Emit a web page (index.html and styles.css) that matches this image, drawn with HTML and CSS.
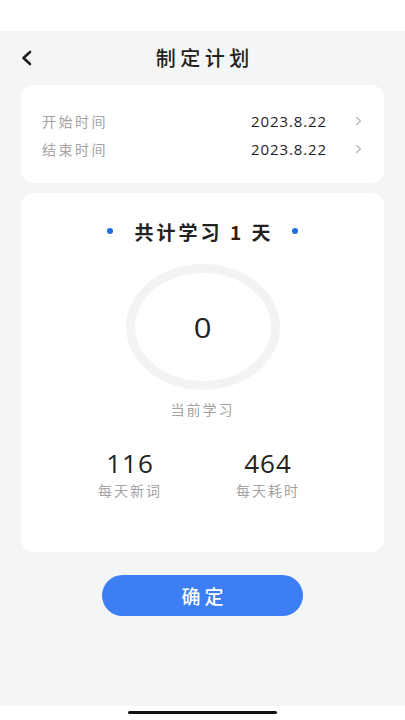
FILE: index.html
```html
<!DOCTYPE html>
<html lang="zh-CN">
<head>
<meta charset="utf-8">
<meta name="viewport" content="width=405, initial-scale=1">
<title>制定计划</title>
<link rel="stylesheet" href="styles.css">
</head>
<body>
<div class="phone">
  <div class="status-bar"></div>
  <main class="main">
    <header class="header">
      <button class="back" aria-label="返回">
        <svg width="14" height="16" viewBox="0 0 14 16"><path d="M10 2 L3.5 8 L10 14" fill="none" stroke="#222" stroke-width="2.6" stroke-linecap="round" stroke-linejoin="round"/></svg>
      </button>
      <h1 class="title">制定计划</h1>
    </header>

    <section class="card dates">
      <div class="row">
        <span class="label">开始时间</span>
        <span class="value">2023.8.22</span>
        <svg class="chev" width="7" height="10" viewBox="0 0 7 10"><path d="M1.5 1.5 L5.5 5 L1.5 8.5" fill="none" stroke="#b5b5b5" stroke-width="1.2" stroke-linecap="round" stroke-linejoin="round"/></svg>
      </div>
      <div class="row">
        <span class="label">结束时间</span>
        <span class="value">2023.8.22</span>
        <svg class="chev" width="7" height="10" viewBox="0 0 7 10"><path d="M1.5 1.5 L5.5 5 L1.5 8.5" fill="none" stroke="#b5b5b5" stroke-width="1.2" stroke-linecap="round" stroke-linejoin="round"/></svg>
      </div>
    </section>

    <section class="card plan">
      <div class="plan-title">
        <span class="dot"></span>
        <span class="plan-text">共计学习 1 天</span>
        <span class="dot"></span>
      </div>
      <div class="ring"><span class="ring-num">0</span></div>
      <div class="ring-label">当前学习</div>
      <div class="stats">
        <div class="stat">
          <div class="stat-num">116</div>
          <div class="stat-label">每天新词</div>
        </div>
        <div class="stat">
          <div class="stat-num">464</div>
          <div class="stat-label">每天耗时</div>
        </div>
      </div>
    </section>

    <div class="btn-wrap"><button class="confirm">确定</button></div>
  </main>
  <div class="home-bar"><span class="indicator"></span></div>
</div>
</body>
</html>
```

FILE: styles.css
```css
* { box-sizing: border-box; }
html, body { margin: 0; padding: 0; }
body {
  font-family: "Noto Sans CJK SC", "Open Sans", sans-serif;
  background: #ffffff;
  color: #222;
}
.phone {
  width: 405px;
  height: 720px;
  display: flex;
  flex-direction: column;
}
.status-bar { height: 31px; background: #fff; flex: none; }
.main {
  flex: 1;
  background: #f4f5f7;
  display: flex;
  flex-direction: column;
}
.header {
  height: 54px;
  flex: none;
  display: flex;
  align-items: center;
  justify-content: center;
  position: relative;
}
.back {
  position: absolute;
  left: 20px;
  top: 19px;
  border: 0;
  background: none;
  padding: 0;
  width: 14px;
  height: 16px;
  display: flex;
}
.title {
  margin: 0;
  font-size: 20px;
  font-weight: 500;
  letter-spacing: 4.5px;
  margin-right: -4.5px;
  line-height: 28px;
  color: #222;
}
.card {
  background: #fff;
  border-radius: 13px;
  margin: 0 21px;
}
.dates {
  padding: 22px 22px 20px 21px;
}
.row {
  height: 28px;
  display: flex;
  align-items: center;
}
.label {
  flex: 1;
  font-size: 14px;
  letter-spacing: 2.5px;
  color: #a3a3a3;
}
.value {
  font-family: "Open Sans", sans-serif;
  font-size: 15px;
  letter-spacing: 0.9px;
  color: #1e1e1e;
}
.chev { margin-left: 28px; }
.plan {
  margin-top: 10px;
  padding: 26px 0 52px;
  display: flex;
  flex-direction: column;
  align-items: center;
}
.plan-title {
  height: 24px;
  display: flex;
  align-items: center;
  gap: 22px;
}
.dot {
  width: 6px;
  height: 6px;
  border-radius: 50%;
  background: #1c6de2;
}
.plan-text {
  font-size: 19px;
  font-weight: 700;
  letter-spacing: 3px;
  margin-right: -3px;
  color: #222;
}
.ring {
  margin-top: 21px;
  width: 154px;
  height: 126px;
  border-radius: 50%;
  border: 9px solid #f2f3f5;
  display: flex;
  align-items: center;
  justify-content: center;
}
.ring-num {
  font-family: "Open Sans", sans-serif;
  font-size: 27px;
  color: #222;
  transform: scaleX(1.15);
}
.ring-label {
  margin-top: 9px;
  line-height: 20px;
  font-size: 14px;
  letter-spacing: 2px;
  color: #a3a3a3;
}
.stats {
  margin-top: 29px;
  display: flex;
  gap: 38px;
  padding-right: 7px;
}
.stat {
  width: 100px;
  display: flex;
  flex-direction: column;
  align-items: center;
}
.stat-num {
  font-family: "Open Sans", sans-serif;
  font-size: 26px;
  line-height: 30px;
  letter-spacing: 1px;
  color: #222;
}
.stat-label {
  margin-top: 2px;
  line-height: 20px;
  font-size: 14px;
  letter-spacing: 2px;
  color: #a3a3a3;
}
.btn-wrap {
  margin-top: 23px;
  display: flex;
  justify-content: center;
}
.confirm {
  width: 201px;
  height: 41px;
  border: 0;
  border-radius: 21px;
  background: #3d7ef4;
  color: #fff;
  font-family: "Noto Sans CJK SC", sans-serif;
  font-size: 19px;
  font-weight: 500;
  letter-spacing: 4px;
  padding: 0 0 0 4px;
}
.home-bar {
  height: 14px;
  flex: none;
  background: #fff;
  display: flex;
  justify-content: center;
  padding-top: 5px;
}
.indicator {
  width: 149px;
  height: 3px;
  border-radius: 2px;
  background: #111;
}
```
